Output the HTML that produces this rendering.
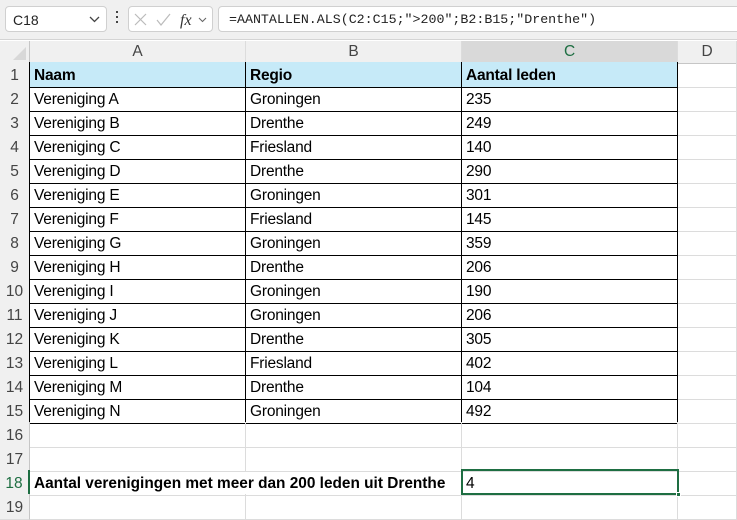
<!DOCTYPE html>
<html><head><meta charset="utf-8"><style>
*{box-sizing:border-box;margin:0;padding:0}
body{width:737px;height:516px;overflow:hidden;background:#fff;font-family:"Liberation Sans Narrow","Liberation Sans",sans-serif;position:relative}
.top{position:absolute;left:0;top:0;width:737px;height:40px;background:#f0f0f0;border-bottom:1px solid #d4d4d4}
.nb{position:absolute;left:5px;top:6px;width:102px;height:26px;background:#fff;border:1px solid #d0d0d0;border-radius:4px;font:14px "Liberation Sans",sans-serif;color:#222;padding:5px 0 0 7px}
.fb{position:absolute;left:128px;top:6px;width:85px;height:26px;background:#fff;border:1px solid #d0d0d0;border-radius:4px}
.fx{position:absolute;left:218px;top:6px;width:530px;height:26px;background:#fff;border:1px solid #d0d0d0;border-radius:4px 0 0 4px;font:13.3px "Liberation Mono",monospace;color:#222;padding:5px 0 0 10px;white-space:nowrap}
.grid{position:absolute;left:0;top:41px}
.r{display:grid;grid-template-columns:30px 216px 216px 216px 59px;height:24px}
.r>div{border-right:1px solid #dcdcdc;border-bottom:1px solid #dcdcdc;font-size:15.5px;line-height:23px;padding:2px 0 0 4px;white-space:nowrap;overflow:visible;color:#000;letter-spacing:-0.2px}
.r>div:first-child{background:#f0f0f0;color:#444;text-align:center;padding:2px 0 0 0;border-right:1px solid #c6c6c6;border-bottom:1px solid #dcdcdc;letter-spacing:0}
.h{height:21px}
.h>div{background:#f0f0f0;color:#444;text-align:center;padding:1px 0 0 0!important;line-height:20px;border-bottom:1px solid #c6c6c6!important}
.t>div:nth-child(2),.t>div:nth-child(3),.t>div:nth-child(4){border-right:1px solid #000;border-bottom:1px solid #000}
.t>div:first-child{border-right:1px solid #000}
.hd>div:nth-child(2),.hd>div:nth-child(3),.hd>div:nth-child(4){background:#c6eaf8;font-weight:bold}
.h>div.b{border-bottom:1px solid #000!important}
</style></head><body>
<div class="top"></div>
<div class="nb">C18<svg style="position:absolute;right:6px;top:9px" width="11" height="7" viewBox="0 0 11 7"><path d="M1 1l4.5 4.5L10 1" stroke="#444" stroke-width="1.3" fill="none"/></svg></div>
<div style="position:absolute;left:116px;top:11px;width:2px;height:16px"><div style="width:2px;height:2px;background:#444;margin-bottom:3px"></div><div style="width:2px;height:2px;background:#444;margin-bottom:3px"></div><div style="width:2px;height:2px;background:#444"></div></div>
<div class="fb"><svg width="85" height="26" viewBox="0 0 85 26"><path d="M6 7l11 11M17 7L6 18" stroke="#bbb" stroke-width="1.2"/><path d="M28 13l4 5 9-11" stroke="#bbb" stroke-width="1.2" fill="none"/><text x="51" y="18" font-family="Liberation Serif" font-style="italic" font-size="16" fill="#333">fx</text><path d="M70 11l3.5 3.5L77 11" stroke="#666" stroke-width="1.1" fill="none"/></svg></div>
<div class="fx">=AANTALLEN.ALS(C2:C15;"&gt;200";B2:B15;"Drenthe")</div>
<div class="grid">
<div class="r h"><div><svg width="30" height="21" style="display:block"><path d="M26 5V18H13Z" fill="#d8d8d8"/></svg></div><div class="b">A</div><div class="b">B</div><div class="b" style="background:#d9d9d9;color:#1e6e42;border-bottom:2px solid #1e6e42!important">C</div><div>D</div></div>
<div class="r t hd"><div>1</div><div>Naam</div><div>Regio</div><div>Aantal leden</div><div></div></div>
<div class="r t"><div>2</div><div>Vereniging A</div><div>Groningen</div><div>235</div><div></div></div>
<div class="r t"><div>3</div><div>Vereniging B</div><div>Drenthe</div><div>249</div><div></div></div>
<div class="r t"><div>4</div><div>Vereniging C</div><div>Friesland</div><div>140</div><div></div></div>
<div class="r t"><div>5</div><div>Vereniging D</div><div>Drenthe</div><div>290</div><div></div></div>
<div class="r t"><div>6</div><div>Vereniging E</div><div>Groningen</div><div>301</div><div></div></div>
<div class="r t"><div>7</div><div>Vereniging F</div><div>Friesland</div><div>145</div><div></div></div>
<div class="r t"><div>8</div><div>Vereniging G</div><div>Groningen</div><div>359</div><div></div></div>
<div class="r t"><div>9</div><div>Vereniging H</div><div>Drenthe</div><div>206</div><div></div></div>
<div class="r t"><div>10</div><div>Vereniging I</div><div>Groningen</div><div>190</div><div></div></div>
<div class="r t"><div>11</div><div>Vereniging J</div><div>Groningen</div><div>206</div><div></div></div>
<div class="r t"><div>12</div><div>Vereniging K</div><div>Drenthe</div><div>305</div><div></div></div>
<div class="r t"><div>13</div><div>Vereniging L</div><div>Friesland</div><div>402</div><div></div></div>
<div class="r t"><div>14</div><div>Vereniging M</div><div>Drenthe</div><div>104</div><div></div></div>
<div class="r t"><div>15</div><div>Vereniging N</div><div>Groningen</div><div>492</div><div></div></div>
<div class="r"><div>16</div><div></div><div></div><div></div><div></div></div>
<div class="r"><div>17</div><div></div><div></div><div></div><div></div></div>
<div class="r"><div style="color:#1e6e42;border-right:2px solid #1e6e42">18</div><div style="font-weight:bold;border-right:none;font-size:15.4px;letter-spacing:0">Aantal verenigingen met meer dan 200 leden uit Drenthe</div><div></div><div>4</div><div></div></div>
<div class="r"><div>19</div><div></div><div></div><div></div><div></div></div>
</div>
<div style="position:absolute;left:461px;top:469px;width:218px;height:26px;border:2px solid #1e6e42"></div>
<div style="position:absolute;left:676px;top:492px;width:5px;height:5px;background:#1e6e42;border:1px solid #fff"></div>
</body></html>
